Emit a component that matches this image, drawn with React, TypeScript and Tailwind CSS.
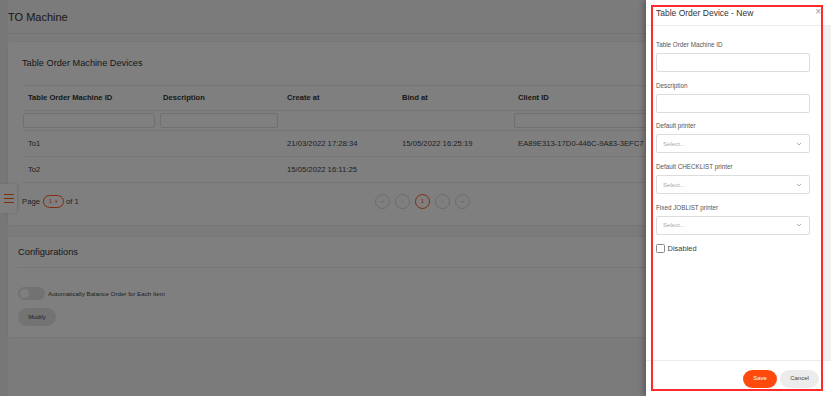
import React from "react";

function Chevron() {
  return (
    <svg width="6" height="4" viewBox="0 0 6 4" className="text-[#999]">
      <path d="M0.8 0.8 L3 3 L5.2 0.8" fill="none" stroke="currentColor" strokeWidth="0.8" />
    </svg>
  );
}

function Field({ label, select }: { label: string; select?: boolean }) {
  return (
    <div className="flex flex-col gap-[4px]">
      <div className="h-[8px] text-[6.3px] leading-[8px] text-[#555]">{label}</div>
      {select ? (
        <div className="flex h-[19px] items-center justify-between rounded-[2px] border border-[#dcdcdc] bg-white pl-[6px] pr-[7px]">
          <span className="text-[6.1px] leading-[8px] text-[#aaa]">Select...</span>
          <Chevron />
        </div>
      ) : (
        <div className="h-[19px] rounded-[2px] border border-[#dcdcdc] bg-white" />
      )}
    </div>
  );
}

function PageBtn({ children, active }: { children: React.ReactNode; active?: boolean }) {
  return (
    <div
      className={
        "flex h-[15px] w-[15px] items-center justify-center rounded-full border text-[6px] " +
        (active ? "border-[#ff5a1f] text-[#ff5a1f]" : "border-[#d8d8d8] text-[#c8c8c8]")
      }
    >
      {children}
    </div>
  );
}

export default function App() {
  const cols = "grid grid-cols-[135px_124px_115px_116px_1fr]";
  return (
    <div className="relative h-[396px] w-[831px] overflow-hidden bg-[#efefef] font-['Liberation_Sans',Arial,sans-serif] text-[#333]">
      {/* page */}
      <div className="ml-[8px] flex h-full flex-col bg-[#f6f6f6]">
        <div className="flex h-[34px] shrink-0 items-center border-b border-[#e6e6e6] pt-[1px] text-[11px] text-[#333]">
          TO Machine
        </div>
        <div className="flex flex-col gap-[12px] pt-[8px]">
          {/* card 1 */}
          <div className="flex h-[183px] w-[815px] flex-col rounded-[4px] bg-white px-[14px] shadow-[0_0_3px_rgba(0,0,0,0.08)]">
            <div className="flex h-[44px] shrink-0 items-center border-b border-[#ececec] pt-[1px] text-[9.2px] text-[#333]">
              Table Order Machine Devices
            </div>
            <div className={cols + " h-[25px] items-center border-b border-[#ececec] text-[7.6px] font-bold text-[#333]"}>
              <div className="pl-[6px]">Table Order Machine ID</div>
              <div className="pl-[6px]">Description</div>
              <div className="pl-[6px]">Create at</div>
              <div className="pl-[6px]">Bind at</div>
              <div className="pl-[6px]">Client ID</div>
            </div>
            <div className={cols + " h-[20px] items-center border-b border-[#ececec]"}>
              <div className="ml-[1px] mr-[2px] h-[15px] rounded-[2px] border border-[#e0e0e0]" />
              <div className="ml-[3px] mr-[3px] h-[15px] rounded-[2px] border border-[#e0e0e0]" />
              <div />
              <div />
              <div className="ml-[2px] h-[15px] rounded-[2px] border border-[#e0e0e0]" />
            </div>
            <div className={cols + " h-[26px] items-center border-b border-[#ececec] text-[7.7px] text-[#444]"}>
              <div className="pl-[6px]">To1</div>
              <div />
              <div className="pl-[6px]">21/03/2022 17:28:34</div>
              <div className="pl-[6px]">15/05/2022 16:25:19</div>
              <div className="whitespace-nowrap pl-[6px]">EA89E313-17D0-446C-9A83-3EFC7</div>
            </div>
            <div className={cols + " h-[26px] items-center border-b border-[#ececec] text-[7.7px] text-[#444]"}>
              <div className="pl-[6px]">To2</div>
              <div />
              <div className="pl-[6px]">15/05/2022 16:11:25</div>
              <div />
              <div />
            </div>
            <div className="relative flex h-[36px] items-center pt-[1px] text-[7.7px] text-[#444]">
              <span>Page</span>
              <div className="ml-[3px] flex h-[13px] w-[21px] items-center justify-center gap-[2px] rounded-full border border-[#ff5a1f] text-[6px] text-[#ff5a1f]">
                <span>1</span>
                <span className="text-[4px]">▼</span>
              </div>
              <span className="ml-[2px]">of 1</span>
              <div className="absolute left-[353px] top-[11px] flex gap-[5px]">
                <PageBtn>«</PageBtn>
                <PageBtn>‹</PageBtn>
                <PageBtn active>1</PageBtn>
                <PageBtn>›</PageBtn>
                <PageBtn>»</PageBtn>
              </div>
            </div>
          </div>
          {/* card 2 */}
          <div className="flex h-[100px] w-[815px] flex-col rounded-[4px] bg-white px-[10px] shadow-[0_0_3px_rgba(0,0,0,0.08)]">
            <div className="flex h-[31px] shrink-0 items-center border-b border-[#ececec] pt-[2px] text-[9.3px] text-[#333]">
              Configurations
            </div>
            <div className="mt-[19px] flex items-center gap-[3px]">
              <div className="flex h-[13px] w-[27px] items-center rounded-full bg-[#e4e4e4] px-[2px]">
                <div className="h-[9px] w-[9px] rounded-full bg-white" />
              </div>
              <span className="text-[6.2px] text-[#444]">Automatically Balance Order for Each Item</span>
            </div>
            <div className="mt-[8px] flex h-[18px] w-[38px] items-center justify-center rounded-full bg-[#e6e6e6] text-[6px] text-[#444]">
              Modify
            </div>
          </div>
        </div>
      </div>

      {/* side menu button */}
      <div className="absolute left-0 top-[184px] flex h-[29px] w-[17px] flex-col items-center justify-center gap-[3px] rounded-r-[3px] bg-white shadow-[1px_0_3px_rgba(0,0,0,0.15)]">
        <div className="h-[1.2px] w-[10px] bg-[#ff5a1f]" />
        <div className="h-[1.2px] w-[10px] bg-[#ff5a1f]" />
        <div className="h-[1.2px] w-[10px] bg-[#ff5a1f]" />
      </div>

      {/* overlay */}
      <div className="absolute inset-0 bg-black/50" />

      {/* drawer */}
      <div className="absolute right-0 top-0 flex h-full w-[185px] flex-col bg-white shadow-[-2px_0_6px_rgba(0,0,0,0.3)]">
        <div className="relative flex h-[26px] shrink-0 items-center border-b border-[#ececec] pl-[10px] pt-[1px] text-[8.5px] text-[#333]">
          Table Order Device - New
          <span className="absolute right-[10px] top-[7px] text-[10px] leading-none text-[#999]">×</span>
        </div>
        <div className="flex flex-1">
          <div className="flex flex-1 flex-col gap-[9.7px] pl-[10px] pr-[13px] pt-[15px]">
            <Field label="Table Order Machine ID" />
            <Field label="Description" />
            <Field label="Default printer" select />
            <Field label="Default CHECKLIST printer" select />
            <Field label="Fixed JOBLIST printer" select />
            <div className="-mt-[1.5px] flex items-center gap-[3px]">
              <div className="h-[8.5px] w-[8.5px] rounded-[1.5px] border border-[#888] bg-white" />
              <span className="text-[7.5px] text-[#444]">Disabled</span>
            </div>
          </div>
          <div className="w-[8px] bg-[#f1f1f1]" />
        </div>
        <div className="flex h-[36px] shrink-0 items-center justify-end gap-[3px] border-t border-[#ececec] pr-[12px]">
          <div className="flex h-[18px] w-[34px] items-center justify-center rounded-full bg-[#ff4a0d] text-[6px] text-white">
            Save
          </div>
          <div className="flex h-[18px] w-[39px] items-center justify-center rounded-full bg-[#ececec] text-[6px] text-[#444]">
            Cancel
          </div>
        </div>
      </div>

      {/* highlight box */}
      <div className="absolute left-[651px] top-[5px] h-[386px] w-[172px] border-2 border-[#ff2b2b]" />
    </div>
  );
}
